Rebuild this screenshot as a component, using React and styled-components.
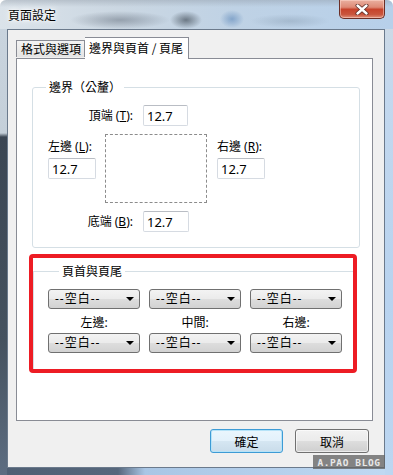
import React from 'react';
import styled, { createGlobalStyle } from 'styled-components';

const GlobalStyle = createGlobalStyle`
  html, body {
    margin: 0;
    padding: 0;
    background: #ffffff;
  }
  body {
    font-family: "Noto Sans", "Noto Sans CJK TC", sans-serif;
    font-size: 12px;
    color: #000;
  }
`;

const Window = styled.div`
  position: relative;
  width: 393px;
  height: 475px;
  display: flex;
  flex-direction: column;
  border-radius: 6px 6px 0 0;
  overflow: hidden;
`;

const TitleBar = styled.div`
  height: 29px;
  flex: none;
  display: flex;
  align-items: flex-start;
  background:
    radial-gradient(ellipse 50px 9px at 120px 20px, rgba(70, 80, 95, 0.4), transparent),
    radial-gradient(ellipse 16px 9px at 186px 20px, rgba(35, 45, 55, 0.55), transparent),
    radial-gradient(ellipse 12px 9px at 232px 19px, rgba(60, 110, 170, 0.45), transparent),
    radial-gradient(ellipse 40px 7px at 290px 21px, rgba(110, 130, 150, 0.3), transparent),
    linear-gradient(to bottom, rgba(140, 150, 162, 0.4), transparent 7px),
    linear-gradient(to right, #dbe3ea 0, #cbd7e2 30%, #bfd2e5 60%, #b7d0ea 100%);
`;

const Title = styled.div`
  margin: 7px 0 0 8px;
  line-height: 16px;
  font-size: 12px;
  font-family: "Noto Sans CJK TC", sans-serif;
  text-shadow: 0 0 4px #fff, 0 0 8px #fff, 0 0 2px #fff;
`;

const CloseButton = styled.div`
  margin-left: auto;
  margin-right: 8px;
  width: 46px;
  height: 19px;
  box-sizing: border-box;
  border: 1px solid #6b2e26;
  border-top: none;
  border-radius: 0 0 5px 5px;
  display: flex;
  align-items: center;
  justify-content: center;
  background: linear-gradient(
    to bottom,
    #eab0a0 0%,
    #de8a76 40%,
    #c7432c 52%,
    #c9553d 80%,
    #e0917c 100%
  );
  box-shadow: inset 0 0 0 1px rgba(255, 220, 210, 0.5);
`;

const Body = styled.div`
  flex: 1;
  display: flex;
  padding: 0 8px 7px 7px;
  background:
    linear-gradient(to bottom, #c9d4de 0, #c4cfd9 104px, #3b4653 108px, #45525f 70%, #5d6d81 100%) left top / 7px 100% no-repeat,
    linear-gradient(to bottom, #ccd9e6 0, #c3d8ee 60px, #b8d3ef 60%, #bcd6f1 100%) right top / 8px 100% no-repeat,
    linear-gradient(to right, #4f5f73 0, #56677c 118px, #a9c6e5 145px, #c0d9f2 100%) left bottom / 100% 7px no-repeat,
    #bcd6f1;
`;

const Client = styled.div`
  flex: 1;
  display: flex;
  flex-direction: column;
  background: #f0f0f0;
  border: 1px solid #6b7a8c;
  padding: 7px 11px 14px 8px;
`;

const TabRow = styled.div`
  display: flex;
  align-items: flex-end;
  height: 21px;
`;

const Tab = styled.div`
  box-sizing: border-box;
  border: 1px solid #898c95;
  border-bottom: none;
  line-height: 16px;
  font-size: 12px;
  font-family: "Noto Sans CJK TC", sans-serif;
  white-space: nowrap;
  ${(p) =>
    p.$active
      ? `
    position: relative;
    z-index: 1;
    height: 22px;
    margin-bottom: -1px;
    padding: 2px 5px 0 4px;
    background: #ffffff;
    border-left: none;
  `
      : `
    height: 17px;
    margin-bottom: 1px;
    padding: 0 3px 0 4px;
    background: linear-gradient(to bottom, #f3f3f3, #e4e4e4);
  `}
`;

const Panel = styled.div`
  height: 363px;
  box-sizing: border-box;
  background: #ffffff;
  border: 1px solid #898c95;
  padding-top: 20px;
`;

const GroupBox = styled.fieldset`
  margin: 0 12px 0 15px;
  padding: 0 0 15px 0;
  min-width: 0;
  border: 1px solid #d5dfe5;
  border-radius: 3px;
`;

const Legend = styled.legend`
  margin-left: 13px;
  padding: 0 3px;
  line-height: 16px;
  font-family: "Noto Sans CJK TC", sans-serif;
`;

const EdgeRow = styled.div`
  display: flex;
  align-items: center;
  margin-top: ${(p) => p.$top}px;
`;

const EdgeLabel = styled.label`
  width: 100px;
  margin-right: 10px;
  text-align: right;
  line-height: 16px;
  white-space: nowrap;
`;

const SideRow = styled.div`
  display: flex;
  align-items: flex-start;
  margin-top: 8px;
  padding-left: 15px;
`;

const SideCol = styled.div`
  display: flex;
  flex-direction: column;
  gap: 3px;
  padding-top: 5px;
  width: 48px;
  white-space: nowrap;
`;

const SideLabel = styled.label`
  line-height: 16px;
`;

const NumberBox = styled.input`
  box-sizing: border-box;
  width: ${(p) => p.$w || 45}px;
  height: 21px;
  margin: 0;
  padding: 0 3px;
  border: 1px solid #d6dbe2;
  border-top-color: #b9bdc4;
  border-radius: 2px;
  font-family: "Noto Sans", sans-serif;
  font-size: 13px;
  color: #000;
  background: #fff;
  outline: none;
`;

const PagePreview = styled.div`
  box-sizing: border-box;
  width: 102px;
  height: 69px;
  margin: 0 10px 0 9px;
  border: 1px dashed #8c8c8c;
`;

const Highlight = styled.div`
  margin: 6px 15px 0 12px;
  padding-top: 5px;
  border: 4px solid #ed1c24;
  border-radius: 4px;
`;

const HeaderGroup = styled.fieldset`
  margin: 0;
  padding: 0 0 16px 14px;
  min-width: 0;
  border: solid #d5dfe5;
  border-width: 1px 0 0 1px;
`;

const HeaderLegend = styled.legend`
  margin-left: 11px;
  padding: 0 3px;
  line-height: 16px;
  font-family: "Noto Sans CJK TC", sans-serif;
`;

const DropGrid = styled.div`
  display: grid;
  grid-template-columns: repeat(3, 92px);
  column-gap: 9px;
  margin-top: 10px;
`;

const DropLabel = styled.div`
  text-align: center;
  line-height: 16px;
  margin: 6px 0 2px;
`;

const Dropdown = styled.button`
  box-sizing: border-box;
  height: 20px;
  margin: 0;
  padding: 0 5px 0 6px;
  display: flex;
  align-items: center;
  justify-content: space-between;
  border: 1px solid #707070;
  border-radius: 3px;
  background: linear-gradient(
    to bottom,
    #f3f3f3 0%,
    #ebebeb 48%,
    #dddddd 52%,
    #d2d2d2 100%
  );
  font-family: "Noto Sans", "Noto Sans CJK TC", sans-serif;
  font-size: 12px;
  line-height: 16px;
  color: #000;

  span {
    letter-spacing: 1px;
  }
`;

const ButtonRow = styled.div`
  display: flex;
  justify-content: flex-end;
  gap: 12px;
  margin-top: 8px;
  margin-right: 4px;
`;

const DialogButton = styled.button`
  box-sizing: border-box;
  width: ${(p) => p.$w}px;
  height: 24px;
  margin: 0;
  padding: 0;
  border: 1px solid ${(p) => (p.$focused ? '#3d9bd5' : '#707070')};
  border-radius: 3px;
  background: linear-gradient(
    to bottom,
    ${(p) => (p.$focused ? '#eaf6fd' : '#f2f2f2')} 0%,
    ${(p) => (p.$focused ? '#e3f1fb' : '#ebebeb')} 48%,
    ${(p) => (p.$focused ? '#d5e6f2' : '#dddddd')} 52%,
    ${(p) => (p.$focused ? '#c9dcea' : '#cfcfcf')} 100%
  );
  box-shadow: ${(p) => (p.$focused ? 'inset 0 0 0 1px #b6e3f8' : 'inset 0 0 0 1px rgba(255,255,255,0.6)')};
  font-family: "Noto Sans CJK TC", sans-serif;
  font-size: 12px;
  color: #000;
`;

const Watermark = styled.div`
  position: absolute;
  right: 8px;
  bottom: 6px;
  width: 72px;
  height: 14px;
  display: flex;
  align-items: center;
  justify-content: center;
  background: rgba(100, 100, 100, 0.78);
  color: #e8e8e8;
  font-family: "DejaVu Sans Mono", monospace;
  font-weight: bold;
  font-size: 9.5px;
  letter-spacing: 0.6px;
`;

const Arrow = () => (
  <svg width="8" height="4" viewBox="0 0 8 4">
    <path d="M0 0 H8 L4 4 Z" fill="#000" />
  </svg>
);

const CloseIcon = () => (
  <svg width="14" height="11" viewBox="0 0 14 11">
    <path d="M2.5 1.5 L11.5 9.5 M11.5 1.5 L2.5 9.5" stroke="#5a2a24" strokeWidth="4" strokeLinecap="round" />
    <path d="M2.5 1.5 L11.5 9.5 M11.5 1.5 L2.5 9.5" stroke="#ffffff" strokeWidth="2.4" strokeLinecap="round" />
  </svg>
);

const positions = ['左邊:', '中間:', '右邊:'];

const App = () => {
  return (
    <>
      <GlobalStyle />
      <Window>
        <TitleBar>
          <Title>頁面設定</Title>
          <CloseButton>
            <CloseIcon />
          </CloseButton>
        </TitleBar>
        <Body>
          <Client>
            <TabRow>
              <Tab>格式與選項</Tab>
              <Tab $active>邊界與頁首 / 頁尾</Tab>
            </TabRow>
            <Panel>
              <GroupBox>
                <Legend>邊界（公釐）</Legend>
                <EdgeRow $top={10}>
                  <EdgeLabel>頂端 (<u>T</u>):</EdgeLabel>
                  <NumberBox readOnly value="12.7" />
                </EdgeRow>
                <SideRow>
                  <SideCol>
                    <SideLabel>左邊 (<u>L</u>):</SideLabel>
                    <NumberBox readOnly value="12.7" $w={48} />
                  </SideCol>
                  <PagePreview />
                  <SideCol>
                    <SideLabel>右邊 (<u>R</u>):</SideLabel>
                    <NumberBox readOnly value="12.7" $w={48} />
                  </SideCol>
                </SideRow>
                <EdgeRow $top={8}>
                  <EdgeLabel>底端 (<u>B</u>):</EdgeLabel>
                  <NumberBox readOnly value="12.7" $w={46} />
                </EdgeRow>
              </GroupBox>

              <Highlight>
                <HeaderGroup>
                  <HeaderLegend>頁首與頁尾</HeaderLegend>
                  <DropGrid>
                    {positions.map((p) => (
                      <Dropdown key={'h' + p} type="button">
                        <span>--空白--</span>
                        <Arrow />
                      </Dropdown>
                    ))}
                    {positions.map((p) => (
                      <DropLabel key={'l' + p}>{p}</DropLabel>
                    ))}
                    {positions.map((p) => (
                      <Dropdown key={'f' + p} type="button">
                        <span>--空白--</span>
                        <Arrow />
                      </Dropdown>
                    ))}
                  </DropGrid>
                </HeaderGroup>
              </Highlight>
            </Panel>
            <ButtonRow>
              <DialogButton type="button" $w={73} $focused>確定</DialogButton>
              <DialogButton type="button" $w={74}>取消</DialogButton>
            </ButtonRow>
          </Client>
        </Body>
        <Watermark>A.PAO BLOG</Watermark>
      </Window>
    </>
  );
};

export default App;
